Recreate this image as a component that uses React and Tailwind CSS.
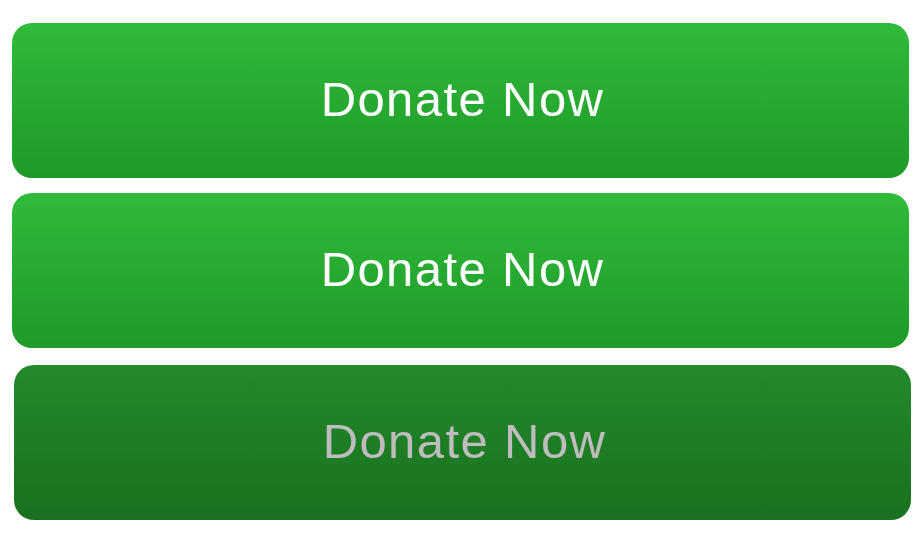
export default function App() {
  const font = { fontFamily: '"Liberation Sans", Arial, sans-serif' };
  return (
    <div className="w-[924px] h-[540px] bg-white pt-[23px] pl-[12px] pr-[15px]" style={font}>
      <div className="flex flex-col gap-[15px]">
        <button className="h-[155px] w-[897px] rounded-[20px] bg-gradient-to-b from-[#2fbb3a] to-[#1f9a28] text-white text-[49px] tracking-[1.4px] flex items-center justify-center pb-[2px] pl-[4px]">
          Donate Now
        </button>
        <button className="h-[155px] w-[897px] rounded-[20px] bg-gradient-to-b from-[#2fbb3a] to-[#1f9a28] text-white text-[49px] tracking-[1.4px] flex items-center justify-center pb-[2px] pl-[4px]">
          Donate Now
        </button>
        <button className="h-[155px] w-[897px] rounded-[20px] bg-gradient-to-b from-[#238a2c] to-[#19711f] text-[#bdbdbd] text-[49px] tracking-[1.4px] flex items-center justify-center pb-[2px] pl-[4px] translate-x-[2px] translate-y-[2px]">
          Donate Now
        </button>
      </div>
    </div>
  );
}
